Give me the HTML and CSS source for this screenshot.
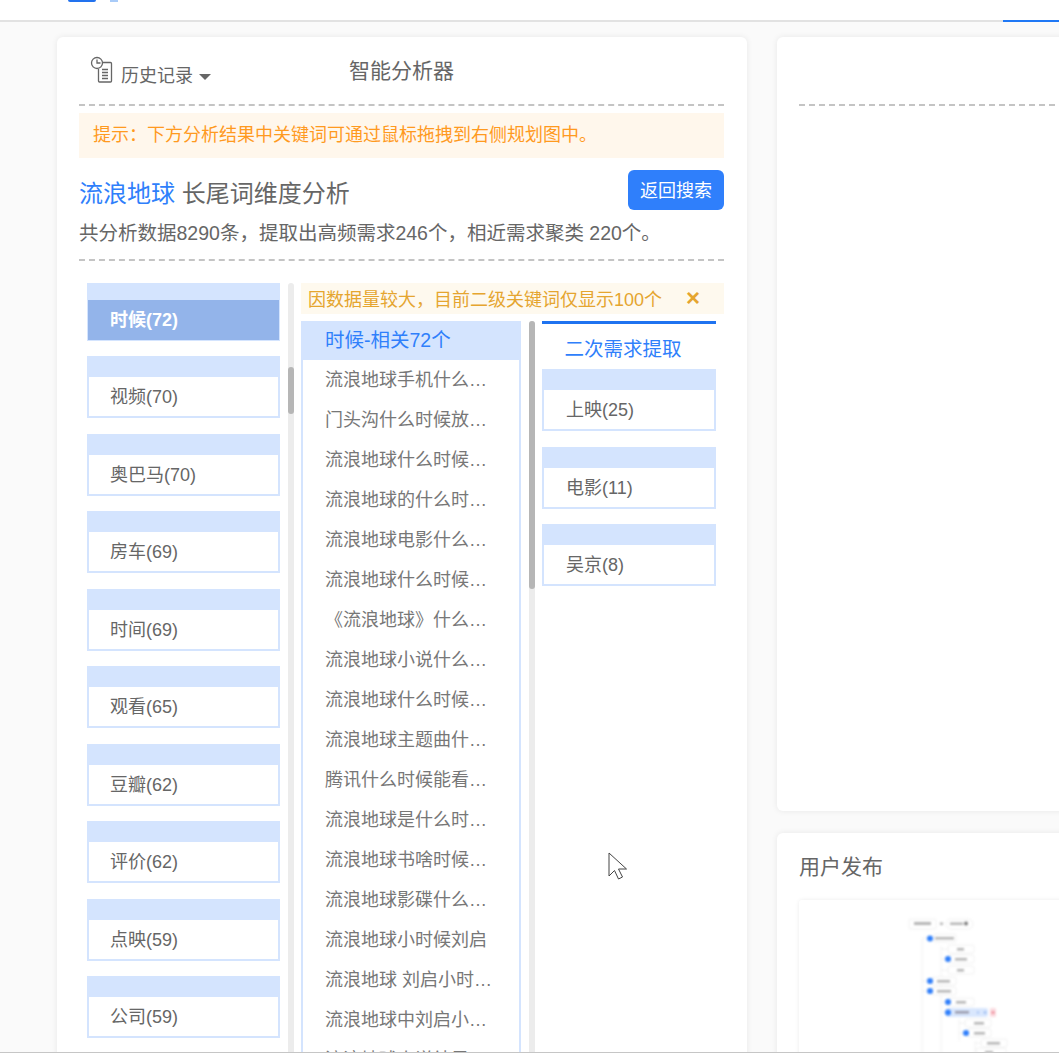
FILE: index.html
```html
<!DOCTYPE html>
<html lang="zh-CN">
<head>
<meta charset="UTF-8" />
<title>智能分析器</title>
<link rel="stylesheet" href="styles.css">
</head>
<body>

<header class="top-bar">
  <div class="logo">
    <span class="logo-mark"></span>
    <span class="logo-text"></span>
  </div>
  <span class="tab-line"></span>
</header>

<main class="main">
  <section class="card card-left">
    <div class="tool">
      <div class="history">
        <svg class="history-icon" width="24" height="28" viewBox="0 0 24 28" fill="none" stroke="#666" stroke-width="1.3">
          <path d="M12 6.5h9.5a1 1 0 0 1 1 1v17.5a1 1 0 0 1-1 1h-11a1 1 0 0 1-1-1v-12"/>
          <path d="M13 13.5h6M13 16.5h6M13 19.5h6M13 22.5h6"/>
          <circle cx="8" cy="7" r="5.5" fill="#fff"/>
          <path d="M8 3.5v3.5h3.5"/>
        </svg>
        <span class="history-text">历史记录</span>
        <span class="caret"></span>
      </div>
      <div class="tool-title">智能分析器</div>
    </div>

    <div class="hint">提示：下方分析结果中关键词可通过鼠标拖拽到右侧规划图中。</div>

    <div class="head">
      <h2 class="head-title"><span class="kw">流浪地球</span> 长尾词维度分析</h2>
      <button class="back-btn">返回搜索</button>
    </div>
    <p class="desc">共分析数据8290条，提取出高频需求246个，相近需求聚类 220个。</p>

    <div class="board">
      <div class="col-first">
        <div class="item active">时候(72)</div>
        <div class="item">视频(70)</div>
        <div class="item">奥巴马(70)</div>
        <div class="item">房车(69)</div>
        <div class="item">时间(69)</div>
        <div class="item">观看(65)</div>
        <div class="item">豆瓣(62)</div>
        <div class="item">评价(62)</div>
        <div class="item">点映(59)</div>
        <div class="item">公司(59)</div>
      </div>
      <div class="scroll scroll-first"><span class="thumb"></span></div>

      <div class="detail">
        <div class="notice">
          <span>因数据量较大，目前二级关键词仅显示100个</span>
          <span class="notice-close">×</span>
        </div>
        <div class="detail-row">
          <div class="col-second">
            <div class="list-head">时候-相关72个</div>
            <div class="list-item">流浪地球手机什么…</div>
            <div class="list-item">门头沟什么时候放…</div>
            <div class="list-item">流浪地球什么时候…</div>
            <div class="list-item">流浪地球的什么时…</div>
            <div class="list-item">流浪地球电影什么…</div>
            <div class="list-item">流浪地球什么时候…</div>
            <div class="list-item">《流浪地球》什么…</div>
            <div class="list-item">流浪地球小说什么…</div>
            <div class="list-item">流浪地球什么时候…</div>
            <div class="list-item">流浪地球主题曲什…</div>
            <div class="list-item">腾讯什么时候能看…</div>
            <div class="list-item">流浪地球是什么时…</div>
            <div class="list-item">流浪地球书啥时候…</div>
            <div class="list-item">流浪地球影碟什么…</div>
            <div class="list-item">流浪地球小时候刘启</div>
            <div class="list-item">流浪地球 刘启小时…</div>
            <div class="list-item">流浪地球中刘启小…</div>
            <div class="list-item">流浪地球小说结局…</div>
          </div>
          <div class="scroll scroll-second"><span class="thumb"></span></div>
          <div class="col-third">
            <div class="third-title">二次需求提取</div>
            <div class="item">上映(25)</div>
            <div class="item">电影(11)</div>
            <div class="item">吴京(8)</div>
          </div>
        </div>
      </div>
    </div>
  </section>

  <div class="side">
    <section class="card card-plan">
      <div class="plan-tool"></div>
    </section>
    <section class="card card-publish">
      <h3 class="publish-title">用户发布</h3>
      <div class="preview">
        <svg class="mindmap" width="261" height="154" viewBox="798 899 261 154">
          <g class="mm-blur" fill="#fff" stroke="#f0f0f0" stroke-width="1">
            <path d="M921 938V1053M940 945V1053M958 1018V1040M974 1040V1053" fill="none"/>
            <path d="M921 937h8M940 948h7M940 958h7M940 969h7M921 980h8M921 990h8M940 1001h7M940 1011h7M958 1022h6M958 1032h6M974 1042h6" fill="none"/>
            <rect x="908" y="918" width="27" height="10" rx="2"/>
            <rect x="945" y="918" width="27" height="10" rx="5"/>
            <rect x="933" y="933" width="22" height="8" rx="2"/>
            <rect x="947" y="944" width="26" height="8" rx="2"/>
            <rect x="947" y="954" width="26" height="8" rx="2"/>
            <rect x="947" y="965" width="26" height="8" rx="2"/>
            <rect x="931" y="976" width="24" height="8" rx="2"/>
            <rect x="931" y="986" width="24" height="8" rx="2"/>
            <rect x="947" y="997" width="26" height="8" rx="2"/>
            <rect x="945" y="1007" width="42" height="9" rx="2" fill="#d9e7fd" stroke="none"/>
            <rect x="989" y="1007" width="6" height="9" rx="1" fill="#fbdde2" stroke="none"/>
            <rect x="964" y="1018" width="26" height="8" rx="2"/>
            <rect x="966" y="1028" width="24" height="8" rx="2"/>
            <rect x="980" y="1038" width="26" height="8" rx="2"/>
            <rect x="975" y="1047" width="30" height="8" rx="2"/>
          </g>
          <g class="mm-blur" fill="#b4b4b4" stroke="none">
            <rect x="913" y="921" width="17" height="3"/>
            <rect x="939" y="921.5" width="3" height="2.5"/>
            <rect x="949" y="921.5" width="13" height="2.5"/>
            <circle cx="965" cy="922.5" r="2" fill="#777"/>
            <rect x="934" y="936" width="19" height="2.5"/>
            <rect x="956" y="947" width="7" height="2.5"/>
            <rect x="954" y="957" width="12" height="2.5"/>
            <rect x="956" y="968" width="7" height="2.5"/>
            <rect x="936" y="979" width="13" height="2.5"/>
            <rect x="936" y="989" width="14" height="2.5"/>
            <rect x="955" y="1000" width="10" height="2.5"/>
            <rect x="954" y="1010" width="14" height="2.5" fill="#99a"/>
            <rect x="973" y="1021" width="10" height="2.5"/>
            <rect x="973" y="1031" width="11" height="2.5"/>
            <rect x="986" y="1041" width="13" height="2.5"/>
            <rect x="984" y="1050" width="8" height="2.5"/>
          </g>
          <g class="mm-blur" fill="#2f7ffb">
            <circle cx="929" cy="937.5" r="3"/>
            <circle cx="947" cy="958" r="3"/>
            <circle cx="929" cy="980" r="3"/>
            <circle cx="929" cy="990" r="3"/>
            <circle cx="947" cy="1001" r="3"/>
            <circle cx="947" cy="1011.5" r="3"/>
            <circle cx="965" cy="1032" r="3"/>
            <circle cx="977" cy="1011.5" r="1" fill="#8fb3ef"/>
            <circle cx="984" cy="1011.5" r="1.2" fill="#8fb3ef"/>
            <circle cx="992" cy="1011.5" r="1.6" fill="#ef8f9c"/>
          </g>
        </svg>
      </div>
    </section>
  </div>
</main>

<svg class="cursor" width="20" height="28" viewBox="0 0 20 28">
  <path d="M1 1V24L6.5 18.5L10.5 27L14.5 25L10.5 17H18.5Z" fill="#fff" stroke="#444" stroke-width="1"/>
</svg>

</body>
</html>
```

FILE: styles.css
```css
html, body {
  margin: 0;
  padding: 0;
}
body {
  position: relative;
  height: 1053px;
  box-sizing: border-box;
  overflow: hidden;
  background: #fafafa;
  border-bottom: 1px solid #c6c6c6;
  font-family: "Liberation Sans", "Noto Sans CJK SC", sans-serif;
  font-size: 18px;
  color: #666;
}
.top-bar {
  display: flex;
  justify-content: space-between;
  align-items: flex-start;
  height: 22px;
  box-sizing: border-box;
  background: #fff;
  border-bottom: 2px solid #e2e2e2;
}
.logo {
  display: flex;
  gap: 14px;
  margin-left: 68px;
}
.logo-mark {
  width: 28px;
  height: 2px;
  background: #2272ee;
  border-radius: 0 0 4px 4px;
}
.logo-text {
  width: 8px;
  height: 2px;
  background: #a9cbf8;
}
.tab-line {
  width: 56px;
  height: 2px;
  margin-top: 20px;
  background: #1f78f5;
}
.main {
  display: flex;
  gap: 30px;
  padding: 15px 0 0 57px;
}
.card {
  box-sizing: border-box;
  background: #fff;
  border-radius: 6px;
  box-shadow: 0 0 6px rgba(0, 0, 0, 0.08);
}
.card-left {
  flex: none;
  width: 690px;
  height: 1100px;
  padding: 0 23px 0 22px;
}

/* toolbar */
.tool {
  display: flex;
  height: 69px;
  box-sizing: border-box;
  border-bottom: 2px dashed #c4c4c4;
}
.history {
  display: flex;
  align-items: flex-end;
  height: 52px;
  margin: 0 0 0 10px;
}
.history-icon {
  margin: 19px 8px 0 0;
  align-self: flex-start;
}
.history-text {
  line-height: 26px;
}
.caret {
  width: 0;
  height: 0;
  margin: 0 0 9px 6px;
  border: 6px solid transparent;
  border-top-color: #666;
  border-bottom: 0;
}
.tool-title {
  margin: 20px 0 0 138px;
  font-size: 21px;
  line-height: 28px;
}
.hint {
  margin-top: 7px;
  height: 45px;
  padding-left: 14px;
  background: #fff7ec;
  color: #ff9a1f;
  line-height: 45px;
}
.head {
  display: flex;
  justify-content: space-between;
  align-items: center;
  margin-top: 12px;
}
.head-title {
  margin: 0;
  padding-top: 7px;
  font-size: 24px;
  font-weight: normal;
  line-height: 33px;
}
.kw {
  color: #2f7ffb;
}
.back-btn {
  width: 96px;
  height: 40px;
  border: 0;
  border-radius: 6px;
  padding: 0 0 3px;
  background: #2f7ffb;
  color: #fff;
  font: inherit;
}
.desc {
  margin: 10px 0 0;
  padding-bottom: 13px;
  border-bottom: 2px dashed #c4c4c4;
  font-size: 19.5px;
  line-height: 26px;
  white-space: nowrap;
}

/* columns */
.board {
  display: flex;
  align-items: flex-start;
  margin-top: 22px;
}
.col-first {
  flex: none;
  width: 193px;
  margin-left: 8px;
}
.item {
  box-sizing: border-box;
  height: 62px;
  margin-bottom: 15.5px;
  padding-left: 21px;
  border: 2px solid #d4e4fe;
  border-top-width: 21px;
  background: #fff;
  line-height: 40px;
}
.item.active {
  height: 58px;
  margin-bottom: 15px;
  padding-left: 22px;
  border-width: 17px 1px 1px;
  background: #93b4ea;
  color: #fff;
  font-weight: bold;
  line-height: 41px;
}
.scroll {
  flex: none;
  width: 6px;
  height: 800px;
  background: #ececec;
  border-radius: 3px;
}
.thumb {
  display: block;
  width: 6px;
  background: #b6b6b6;
  border-radius: 3px;
}
.scroll-first {
  margin: 0 7px 0 8px;
}
.scroll-first .thumb {
  height: 47px;
  margin-top: 84px;
}
.scroll-second {
  margin: 0 7px 0 8px;
}
.scroll-second .thumb {
  height: 268px;
}
.detail {
  flex: none;
  width: 423px;
}
.notice {
  display: flex;
  justify-content: space-between;
  height: 31px;
  padding: 0 24px 0 7px;
  background: #fef9ee;
  color: #e5a52f;
  line-height: 34px;
}
.notice-close {
  font-size: 24px;
  font-weight: bold;
  line-height: 30px;
}
.detail-row {
  display: flex;
  align-items: flex-start;
  margin-top: 7px;
}
.col-second {
  flex: none;
  box-sizing: border-box;
  width: 220px;
  border: solid #d4e4fe;
  border-width: 0 2px;
}
.list-head {
  height: 39px;
  margin: 0 -2px;
  padding-left: 24px;
  background: #d4e4fe;
  color: #2f7ffb;
  font-size: 19.5px;
  line-height: 38px;
}
.list-item {
  height: 40px;
  padding-left: 22px;
  white-space: nowrap;
  color: #777;
  line-height: 40px;
}
.col-third {
  flex: none;
  width: 174px;
  border-top: 3px solid #1f73f0;
}
.third-title {
  height: 45px;
  padding-left: 22.5px;
  color: #2f7ffb;
  font-size: 19.5px;
  line-height: 50px;
}
.col-third .item {
  padding-left: 22px;
}

/* right side */
.side {
  flex: none;
  display: flex;
  flex-direction: column;
  gap: 22px;
  width: 320px;
}
.card-plan {
  height: 774px;
  padding: 0 22px;
}
.plan-tool {
  height: 69px;
  box-sizing: border-box;
  border-bottom: 2px dashed #c4c4c4;
}
.card-publish {
  height: 300px;
  padding: 20px 22px 0;
}
.publish-title {
  margin: 0;
  font-size: 21px;
  font-weight: normal;
  line-height: 28px;
}
.preview {
  margin-top: 19px;
  height: 240px;
  background: #fff;
  border-radius: 3px;
  box-shadow: 0 0 4px rgba(0, 0, 0, 0.08);
}
.mindmap {
  display: block;
}
.mm-blur {
  filter: blur(0.9px);
}
.cursor {
  position: absolute;
  left: 608px;
  top: 852px;
}
```
